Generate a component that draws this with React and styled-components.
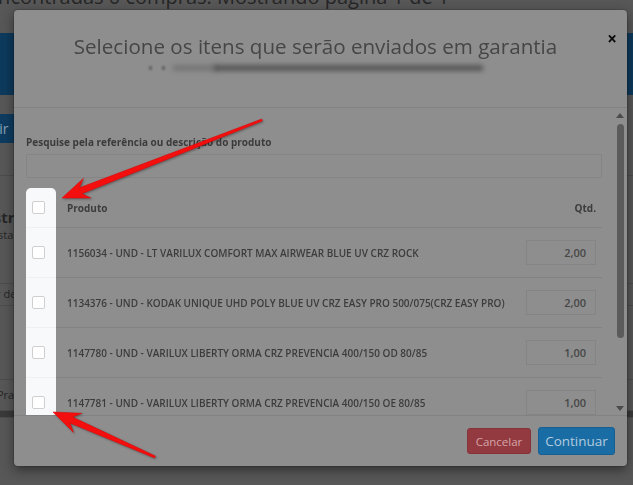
import React from "react";
import styled, { createGlobalStyle } from "styled-components";

const GlobalStyle = createGlobalStyle`
  html, body {
    margin: 0;
    padding: 0;
    background: #575757;
    font-family: "Open Sans", "Noto Sans", sans-serif;
    overflow: hidden;
  }
  * { box-sizing: border-box; }
`;

/* ---------- background page (dimmed) ---------- */
const Page = styled.div`
  width: 633px;
  height: 485px;
  background: #575757;
  overflow: hidden;
  display: flex;
  flex-direction: column;
`;

const PageTitle = styled.div`
  margin: -17px 0 0 -13px;
  font-size: 20px;
  line-height: 28px;
  font-weight: 400;
  color: #262626;
  white-space: nowrap;
`;

const Banner = styled.div`
  margin-top: 22px;
  height: 62px;
  background: #0d3a5c;
`;

const Toolbar = styled.div`
  margin-top: 19px;
  display: flex;
`;

const ToolbarButton = styled.div`
  margin-left: -40px;
  height: 29px;
  padding: 0 40px 0 8px;
  background: #0e3c60;
  color: #8aa1b4;
  font-size: 14px;
  line-height: 29px;
`;

const Panel = styled.div`
  display: flex;
  flex-direction: column;
`;

const PanelRow = styled.div`
  height: ${(p) => p.$h}px;
  border-bottom: 1px solid #4c4c4c;
  display: flex;
  flex-direction: column;
  justify-content: ${(p) => p.$justify || "center"};
  padding-top: ${(p) => p.$pt || 0}px;
  background: ${(p) => p.$bg || "transparent"};
`;

const PanelText = styled.div`
  margin-left: ${(p) => p.$indent}px;
  font-size: ${(p) => p.$size}px;
  font-weight: ${(p) => p.$weight || 400};
  color: #262626;
  line-height: 1.3;
  white-space: nowrap;
`;

/* ---------- modal ---------- */
const Modal = styled.div`
  position: fixed;
  left: 14px;
  top: 10px;
  width: 613px;
  height: 456px;
  background: #8e8e8e;
  border-radius: 4px;
  box-shadow: 0 0 0 1px rgba(0, 0, 0, 0.12), 0 4px 12px rgba(0, 0, 0, 0.45);
  display: flex;
  flex-direction: column;
  overflow: hidden;
`;

const ModalHeader = styled.div`
  position: relative;
  flex-shrink: 0;
  height: 98px;
  border-bottom: 1px solid #828282;
  display: flex;
  flex-direction: column;
  align-items: center;
  padding: 22px 10px 0 0;
`;

const Title = styled.h4`
  margin: 0;
  font-size: 20.6px;
  line-height: 28px;
  font-weight: 400;
  color: #464646;
  white-space: nowrap;
`;

const Redacted = styled.div`
  margin-top: 5px;
  display: flex;
  align-items: center;
  gap: 10px;
`;

const RedactedDot = styled.span`
  width: 3px;
  height: 4px;
  border-radius: 2px;
  background: #5a5a5a;
  filter: blur(1.2px);
`;

const RedactedBar = styled.span`
  width: ${(p) => p.$w}px;
  height: 6px;
  margin-left: ${(p) => p.$ml || 0}px;
  background: rgba(72, 72, 72, ${(p) => p.$o});
  filter: blur(2.6px);
`;

const CloseButton = styled.button`
  position: absolute;
  top: 19px;
  right: 10px;
  border: 0;
  padding: 0;
  background: transparent;
  font-family: "Open Sans", sans-serif;
  font-size: 17px;
  font-weight: 700;
  line-height: 20px;
  color: #0c0c0c;
`;

const ModalBody = styled.div`
  flex: 1;
  min-height: 0;
  display: flex;
`;

const BodyScroll = styled.div`
  flex: 1;
  min-width: 0;
  overflow: hidden;
  padding: 27px 12px 0 12px;
`;

const FieldLabel = styled.label`
  display: block;
  font-size: 10px;
  line-height: 14px;
  font-weight: 700;
  color: #3b3b3b;
  margin-bottom: 5px;
`;

const SearchInput = styled.div`
  height: 24px;
  border: 1px solid #858585;
  background: #8e8e8e;
  border-radius: 1px;
`;

const ItemsTable = styled.div`
  margin-top: 10px;
  display: flex;
  flex-direction: column;
`;

const Row = styled.div`
  display: grid;
  grid-template-columns: 30px 1fr 76px;
  height: ${(p) => (p.$head ? 40 : 50)}px;
  flex-shrink: 0;
`;

const CheckCell = styled.div`
  background: #f8f9fb;
  display: flex;
  align-items: center;
  padding-left: 6px;
  border-radius: ${(p) => (p.$first ? "5px 5px 0 0" : "0")};
  border-bottom: 1px solid #eef0f3;
`;

const Checkbox = styled.span`
  width: 13px;
  height: 13px;
  border: 1px solid #cfcfcf;
  border-radius: 2px;
  background: #ffffff;
`;

const Cell = styled.div`
  display: flex;
  align-items: center;
  justify-content: ${(p) => (p.$right ? "flex-end" : "flex-start")};
  padding: ${(p) => (p.$right ? "0 6px 0 0" : "0 0 0 11px")};
  border-bottom: 1px solid #838383;
  font-size: 10px;
  font-weight: ${(p) => (p.$head ? 700 : 600)};
  color: #3c3c3c;
  white-space: nowrap;
  overflow: hidden;
`;

const QtyInput = styled.div`
  width: 70px;
  height: 25px;
  border: 1px solid #848484;
  background: #8e8e8e;
  display: flex;
  align-items: center;
  justify-content: flex-end;
  padding-right: 9px;
  font-size: 11px;
  color: #474747;
`;

const ScrollTrack = styled.div`
  width: 13px;
  flex-shrink: 0;
  display: flex;
  flex-direction: column;
  align-items: center;
  padding-right: 1px;
`;

const ScrollArrow = styled.div`
  height: 14px;
  width: 100%;
  display: flex;
  align-items: center;
  justify-content: center;
`;

const ScrollThumb = styled.div`
  margin-top: 2px;
  width: 7px;
  height: 214px;
  border-radius: 4px;
  background: #5b5b5b;
`;

const Spacer = styled.div`
  flex: 1;
`;

const ModalFooter = styled.div`
  flex-shrink: 0;
  height: 51px;
  border-top: 1px solid #828282;
  display: flex;
  justify-content: flex-end;
  align-items: center;
  gap: 7px;
  padding-right: 12px;
`;

const Button = styled.button`
  font-family: "Open Sans", sans-serif;
  border-radius: 3px;
  cursor: pointer;
  padding: 0;
  height: ${(p) => (p.$primary ? 28 : 26)}px;
  width: ${(p) => (p.$primary ? 77 : 64)}px;
  font-size: ${(p) => (p.$primary ? 13.5 : 11.5)}px;
  background: ${(p) => (p.$primary ? "#1a6ca5" : "#933a41")};
  border: 1px solid ${(p) => (p.$primary ? "#175f92" : "#86323a")};
  color: ${(p) => (p.$primary ? "#b3cbdd" : "#d7a3a7")};
`;

/* ---------- annotation arrows ---------- */
const AnnotationLayer = styled.svg`
  position: fixed;
  left: 0;
  top: 0;
  width: 633px;
  height: 485px;
  pointer-events: none;
  filter: drop-shadow(1px 1px 1px rgba(0, 0, 0, 0.35));
`;

function arrowPoints(tail, tip) {
  const dx = tail[0] - tip[0];
  const dy = tail[1] - tip[1];
  const len = Math.hypot(dx, dy);
  const u = [dx / len, dy / len];
  const n = [-u[1], u[0]];
  const headLen = 27;
  const headHalf = 10.5;
  const notch = 7;
  const neckHalf = 3.2;
  const tailHalf = 1;
  const at = (d, w) => [tip[0] + u[0] * d + n[0] * w, tip[1] + u[1] * d + n[1] * w];
  const pts = [
    tip,
    at(headLen, headHalf),
    at(headLen - notch, neckHalf),
    [tail[0] + n[0] * tailHalf, tail[1] + n[1] * tailHalf],
    [tail[0] - n[0] * tailHalf, tail[1] - n[1] * tailHalf],
    at(headLen - notch, -neckHalf),
    at(headLen, -headHalf),
  ];
  return pts.map((p) => p.map((v) => v.toFixed(1)).join(",")).join(" ");
}

const Arrow = ({ tail, tip }) => (
  <polygon points={arrowPoints(tail, tip)} fill="#f40f0f" stroke="#e00000" strokeWidth="0.5" strokeLinejoin="round" />
);

const items = [
  { text: "1156034 - UND - LT VARILUX COMFORT MAX AIRWEAR BLUE UV CRZ ROCK", qty: "2,00" },
  { text: "1134376 - UND - KODAK UNIQUE UHD POLY BLUE UV CRZ EASY PRO 500/075(CRZ EASY PRO)", qty: "2,00" },
  { text: "1147780 - UND - VARILUX LIBERTY ORMA CRZ PREVENCIA 400/150 OD 80/85", qty: "1,00" },
  { text: "1147781 - UND - VARILUX LIBERTY ORMA CRZ PREVENCIA 400/150 OE 80/85", qty: "1,00" },
];

export default function App() {
  return (
    <>
      <GlobalStyle />
      <Page>
        <PageTitle>Encontradas 0 compras. Mostrando página 1 de 1</PageTitle>
        <Banner />
        <Toolbar>
          <ToolbarButton>Incluir</ToolbarButton>
        </Toolbar>
        <Panel>
          <PanelRow $h={33} />
          <PanelRow $h={108} $justify="flex-start" $pt={32}>
            <PanelText $indent={-22} $size={15} $weight={700}>Distribuição</PanelText>
            <PanelText $indent={-8} $size={11}>Estado</PanelText>
          </PanelRow>
          <PanelRow $h={22}>
            <PanelText $indent={-26} $size={11}>Valor de compra</PanelText>
          </PanelRow>
          <PanelRow $h={74} />
          <PanelRow $h={31}>
            <PanelText $indent={-3} $size={11}>Prazo de entrega</PanelText>
          </PanelRow>
          <PanelRow $h={7} $bg="#3a3a3a" />
        </Panel>
      </Page>

      <Modal>
        <ModalHeader>
          <Title>Selecione os itens que serão enviados em garantia</Title>
          <Redacted>
            <RedactedDot />
            <RedactedDot />
            <RedactedBar $w={45} $o={0.35} $ml={-2} />
            <RedactedBar $w={269} $o={0.8} $ml={-14} />
          </Redacted>
          <CloseButton aria-label="Fechar">×</CloseButton>
        </ModalHeader>

        <ModalBody>
          <BodyScroll>
            <FieldLabel>Pesquise pela referência ou descrição do produto</FieldLabel>
            <SearchInput />
            <ItemsTable>
              <Row $head>
                <CheckCell $first>
                  <Checkbox />
                </CheckCell>
                <Cell $head>Produto</Cell>
                <Cell $head $right>Qtd.</Cell>
              </Row>
              {items.map((it) => (
                <Row key={it.text}>
                  <CheckCell>
                    <Checkbox />
                  </CheckCell>
                  <Cell>{it.text}</Cell>
                  <Cell $right>
                    <QtyInput>{it.qty}</QtyInput>
                  </Cell>
                </Row>
              ))}
            </ItemsTable>
          </BodyScroll>
          <ScrollTrack>
            <ScrollArrow>
              <svg width="8" height="5" viewBox="0 0 8 5">
                <polygon points="4,0 8,5 0,5" fill="#4c4c4c" />
              </svg>
            </ScrollArrow>
            <ScrollThumb />
            <Spacer />
            <ScrollArrow>
              <svg width="8" height="5" viewBox="0 0 8 5">
                <polygon points="0,0 8,0 4,5" fill="#4c4c4c" />
              </svg>
            </ScrollArrow>
          </ScrollTrack>
        </ModalBody>

        <ModalFooter>
          <Button>Cancelar</Button>
          <Button $primary>Continuar</Button>
        </ModalFooter>
      </Modal>

      <AnnotationLayer viewBox="0 0 633 485">
        <Arrow tail={[262, 120]} tip={[62, 198]} />
        <Arrow tail={[155, 457]} tip={[53, 412]} />
      </AnnotationLayer>
    </>
  );
}
